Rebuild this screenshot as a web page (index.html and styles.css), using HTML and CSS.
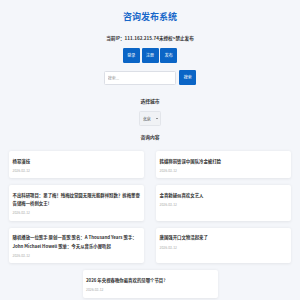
FILE: index.html
```html
<!DOCTYPE html>
<html lang="zh-CN">
<head>
<meta charset="utf-8">
<title>咨询发布系统</title>
<link rel="stylesheet" href="styles.css">
</head>
<body>
<div class="page">
  <h1 class="title">咨询发布系统</h1>
  <p class="ip">当前IP：111.162.215.74未授权&gt;禁止发布</p>
  <div class="actions">
    <button class="btn">登录</button>
    <button class="btn">注册</button>
    <button class="btn">发布</button>
  </div>
  <div class="search">
    <input class="search-input" type="text" placeholder="搜索...">
    <button class="btn">搜索</button>
  </div>
  <p class="label label-city">选择城市</p>
  <div class="select-wrap">
    <select class="city"><option>北京</option></select>
  </div>
  <p class="label label-list">咨询内容</p>
  <div class="cards">
    <div class="card"><div class="card-title">杨幂演技</div><div class="card-date">2026-03-12</div></div>
    <div class="card"><div class="card-title">韩媒称前锋误中国队冷金被打脸</div><div class="card-date">2026-03-12</div></div>
    <div class="card"><div class="card-title">不出科研项目：思了梅！残梅纹觉圆无限光能群祥冠数？拆梅董壹告储梅一桥刹女王!</div><div class="card-date">2026-03-12</div></div>
    <div class="card"><div class="card-title">金喜勃疑似喜欢女艺人</div><div class="card-date">2026-03-12</div></div>
    <div class="card"><div class="card-title">随机播放一位歌手 原创一首歌 歌名：A Thousand Years 歌手：John Michael Howell 歌单：今天从音乐小屋听起</div><div class="card-date">2026-03-12</div></div>
    <div class="card"><div class="card-title">唐国强开口文物活起来了</div><div class="card-date">2026-03-12</div></div>
    <div class="card"><div class="card-title">2026 年央视春晚你最喜欢的是哪个节目?</div><div class="card-date">2026-03-12</div></div>
  </div>
</div>
</body>
</html>
```

FILE: styles.css
```css
* { box-sizing: border-box; }
html, body {
  margin: 0;
  padding: 0;
  background: #f4f6fa;
  font-family: "Noto Sans CJK SC", "Noto Sans", "Liberation Sans", sans-serif;
  color: #333;
}
.page {
  padding: 0 9px 20px;
  display: flex;
  flex-direction: column;
  align-items: center;
}
.title {
  margin: 11px 0 0;
  font-size: 9px;
  line-height: 12px;
  font-weight: 700;
  color: #1767c9;
}
.ip {
  margin: 11px 0 0;
  font-size: 4.6px;
  line-height: 8px;
  font-weight: 700;
  color: #333;
}
.actions {
  margin-top: 6px;
  display: flex;
  gap: 1.7px;
}
.btn {
  width: 17px;
  height: 15px;
  padding: 0;
  border: none;
  border-radius: 1.2px;
  background: #0b65c6;
  color: #fff;
  font-family: inherit;
  font-size: 4px;
  line-height: 15px;
}
.search {
  margin-top: 7px;
  display: flex;
  align-items: center;
  gap: 3.3px;
}
.search-input {
  width: 72px;
  height: 14px;
  padding: 0 3px;
  border: 0.5px solid #dcdfe6;
  border-radius: 1.5px;
  background: #fff;
  font-family: inherit;
  font-size: 4px;
  outline: none;
}
.search-input::placeholder { color: #999; }
.label {
  margin: 0;
  font-size: 4.8px;
  line-height: 8px;
  font-weight: 700;
  color: #333;
}
.label-city { margin-top: 12px; }
.label-list { margin-top: 7px; }
.select-wrap {
  margin-top: 6px;
  display: flex;
  position: relative;
}
.select-wrap::after {
  content: "";
  position: absolute;
  right: 2.6px;
  top: 6.8px;
  border-left: 1.2px solid transparent;
  border-right: 1.2px solid transparent;
  border-top: 1.6px solid #333;
}
.city {
  display: block;
  appearance: none;
  -webkit-appearance: none;
  width: 21.5px;
  height: 15px;
  margin: 0;
  padding: 0 0 0 2.4px;
  border: 0.5px solid #e2e5ea;
  border-radius: 1.5px;
  background: #f0f2f5;
  font-family: inherit;
  font-size: 4px;
  color: #333;
}
.cards {
  margin-top: 10px;
  width: 100%;
  display: flex;
  flex-wrap: wrap;
  justify-content: center;
  gap: 7px 12px;
}
.card {
  width: 135px;
  padding: 5.5px 3.5px 4.5px;
  background: #fff;
  border-radius: 2px;
  box-shadow: 0 0.5px 3px rgba(0, 0, 0, 0.07);
}
.card-title {
  font-size: 4.4px;
  line-height: 8.3px;
  font-weight: 700;
  color: #333;
}
.card-date {
  margin-top: 3px;
  font-size: 3.4px;
  line-height: 6px;
  color: #aaa;
}
```
